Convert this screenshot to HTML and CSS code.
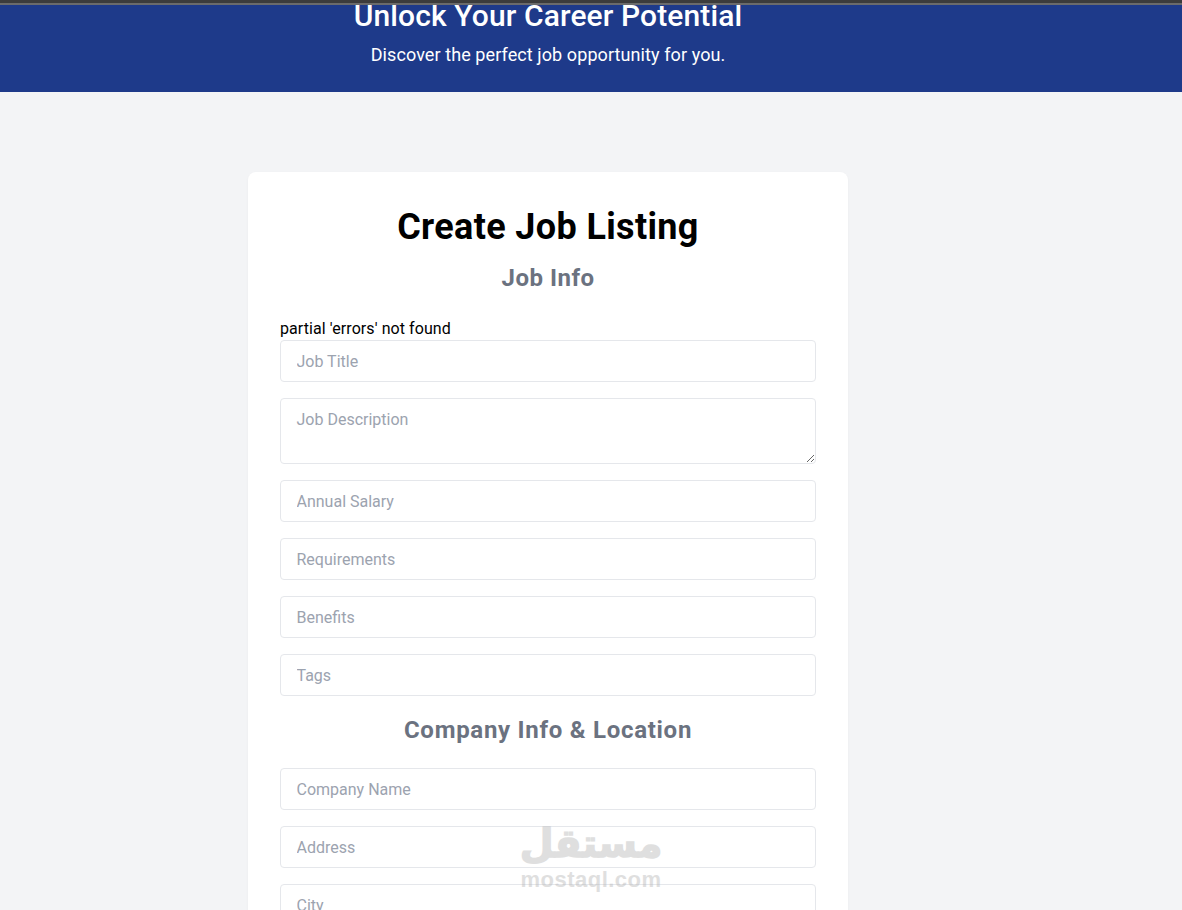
FILE: index.html
```html
<!DOCTYPE html>
<html lang="en">
<head>
<meta charset="utf-8">
<title>Create Job Listing</title>
<link rel="stylesheet" href="styles.css">
</head>
<body>
<div class="topbar"></div>
<section class="hero">
  <div class="hero-inner">
    <h2 class="hero-title">Unlock Your Career Potential</h2>
    <p class="hero-sub">Discover the perfect job opportunity for you.</p>
  </div>
</section>
<main class="page">
  <div class="card">
    <h2 class="card-title">Create Job Listing</h2>
    <form>
      <h2 class="section-title first">Job Info</h2>
      <div class="partial">partial 'errors' not found</div>
      <div class="field"><input class="control" type="text" placeholder="Job Title"></div>
      <div class="field"><textarea class="control area" placeholder="Job Description"></textarea></div>
      <div class="field"><input class="control" type="text" placeholder="Annual Salary"></div>
      <div class="field"><input class="control" type="text" placeholder="Requirements"></div>
      <div class="field"><input class="control" type="text" placeholder="Benefits"></div>
      <div class="field"><input class="control" type="text" placeholder="Tags"></div>
      <h2 class="section-title">Company Info &amp; Location</h2>
      <div class="field"><input class="control" type="text" placeholder="Company Name"></div>
      <div class="field"><input class="control" type="text" placeholder="Address"></div>
      <div class="field"><input class="control" type="text" placeholder="City"></div>
    </form>
  </div>
</main>
<div class="watermark" aria-hidden="true">
  <div class="wm-ar" lang="ar" dir="rtl">مستقل</div>
  <div class="wm-en">mostaql.com</div>
</div>
</body>
</html>
```
FILE: styles.css
```css
* { box-sizing: border-box; }
html, body { margin: 0; height: 910px; overflow: hidden; }
body {
  background: #f3f4f6;
  color: #000;
  font-family: "Roboto", "Open Sans", sans-serif;
  font-size: 16px;
  line-height: 24px;
  position: relative;
}
.topbar { height: 5px; background: #3c3c3c; border-bottom: 2px solid #6b6b6b; }
.hero { height: 87px; background: #1e3a8a; color: #fff; overflow: hidden; }
.hero-inner {
  width: 1096px;
  height: 100%;
  display: flex;
  flex-direction: column;
  justify-content: flex-end;
  align-items: center;
  padding-bottom: 24px;
}
.hero-title { margin: 0 0 8px; font-size: 30px; line-height: 36px; font-weight: 500; letter-spacing: .11px; }
.hero-sub { margin: 0; font-size: 18px; line-height: 26px; letter-spacing: .09px; }
.page { width: 1096px; padding-top: 80px; display: flex; justify-content: center; }
.card { width: 600px; background: #fff; border-radius: 8px; padding: 32px; box-shadow: 0 1px 3px rgba(0,0,0,.04); }
.card-title { margin: 0 0 14px; font-size: 36px; line-height: 46px; height: 44px; font-weight: 700; text-align: center; letter-spacing: .35px; }
.section-title { margin: 18px 0 22px; font-size: 24px; line-height: 32px; font-weight: 700; color: #6b7280; text-align: center; letter-spacing: .72px; }
.section-title.first { margin: 0 0 22px; letter-spacing: .5px; }
.partial { height: 24px; line-height: 26px; letter-spacing: .08px; }
.field { margin-bottom: 16px; }
.control {
  display: block;
  width: 100%;
  height: 42px;
  padding: 8px 16px 8px 15.5px;
  border: 1px solid #e5e7eb;
  border-radius: 4px;
  background: #fff;
  font: inherit;
  color: #000;
  outline: none;
}
.control::placeholder { color: #9ca3af; opacity: 1; }
.area { height: 66px; padding-top: 9px; resize: vertical; }
.watermark {
  position: absolute;
  left: 500px;
  top: 820px;
  width: 182px;
  text-align: center;
  pointer-events: none;
  color: #b4b4b4;
  opacity: .42;
}
.wm-ar { font-family: "DejaVu Sans", sans-serif; font-weight: 700; font-size: 39px; line-height: 48px; -webkit-text-stroke: 1.5px #b4b4b4; }
.wm-en { font-family: "Liberation Sans", sans-serif; font-weight: 700; font-size: 22px; line-height: 24px; letter-spacing: .5px; }
```
